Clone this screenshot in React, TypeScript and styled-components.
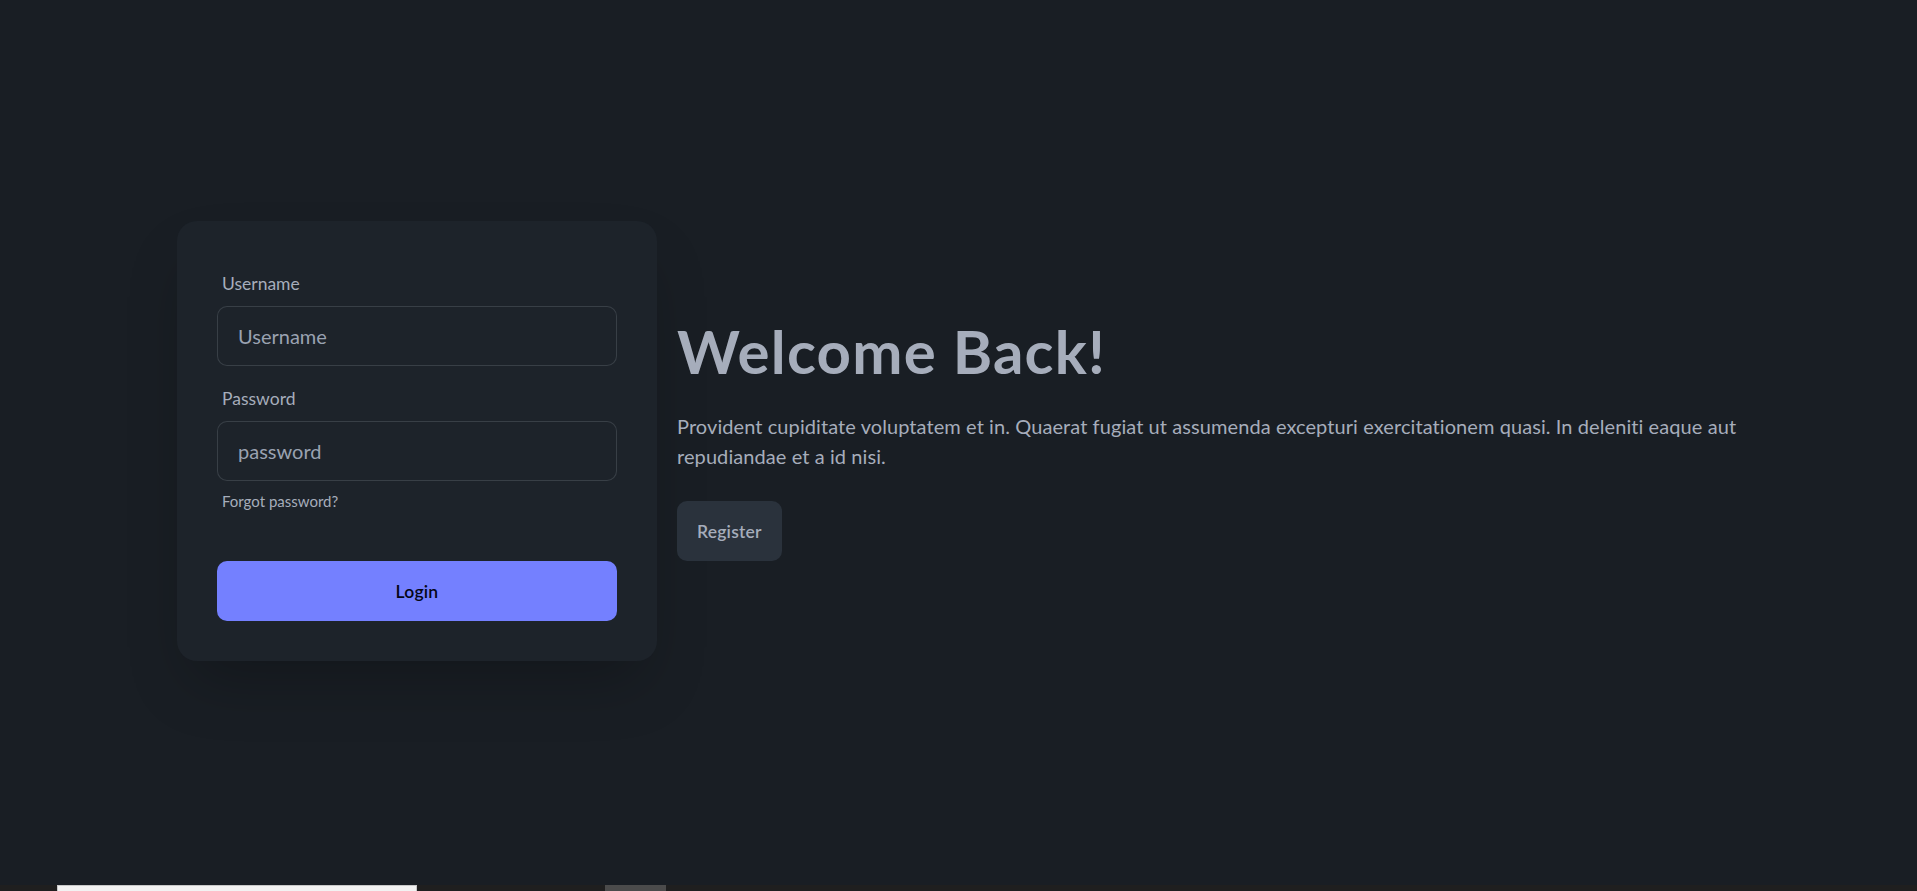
import styled, { createGlobalStyle } from 'styled-components';

const palette = {
	BASE_100: '#1d232a',
	BASE_200: '#191e24',
	NEUTRAL: '#2a323c',
	CONTENT: '#a6adbb',
	PRIMARY: '#7480ff',
	PRIMARY_CONTENT: '#050617',
};

const GlobalStyle = createGlobalStyle`
	html, body {
		margin: 0;
		padding: 0;
		background: ${palette.BASE_200};
	}

	body {
		font-family: Lato, "Noto Sans", sans-serif;
		color: ${palette.CONTENT};
		overflow: hidden;
	}

	* {
		box-sizing: border-box;
	}
`;

const Hero = styled.main`
	display: grid;
	place-items: center;
	min-height: 885px;
	padding-bottom: 3px;
	background: ${palette.BASE_200};
`;

const HeroContent = styled.div`
	display: flex;
	align-items: center;
	gap: 20px;
	width: 100%;
	max-width: 1603px;
	padding: 20px;
`;

const Card = styled.div`
	flex-shrink: 0;
	width: 480px;
	background: ${palette.BASE_100};
	border-radius: 20px;
	box-shadow: 0 31px 62px -15px rgba(0, 0, 0, 0.25);
`;

const CardBody = styled.form`
	display: flex;
	flex-direction: column;
	gap: 10px;
	padding: 40px;
`;

const FormControl = styled.div<{ $spaced?: boolean }>`
	display: flex;
	flex-direction: column;
	margin-top: ${({ $spaced }) => ($spaced ? '30px' : '0')};
`;

const Label = styled.label`
	display: flex;
	align-items: center;
	padding: 10px 5px;
`;

const LabelText = styled.span`
	font-size: 17.5px;
	line-height: 25px;
	color: ${palette.CONTENT};
`;

const LabelLink = styled.a`
	font-size: 15px;
	line-height: 20px;
	color: ${palette.CONTENT};
	cursor: pointer;
	text-decoration: none;
`;

const Input = styled.input`
	height: 60px;
	padding: 0 20px;
	border: 1px solid rgba(166, 173, 187, 0.2);
	border-radius: 10px;
	background: ${palette.BASE_100};
	color: ${palette.CONTENT};
	font-family: inherit;
	font-size: 20px;
	outline: none;

	&::placeholder {
		color: #9aa2b1;
	}
`;

const Button = styled.button<{ $primary?: boolean }>`
	height: 60px;
	padding: 0 20px;
	border: none;
	border-radius: 10px;
	background: ${({ $primary }) => ($primary ? palette.PRIMARY : palette.NEUTRAL)};
	color: ${({ $primary }) => ($primary ? palette.PRIMARY_CONTENT : palette.CONTENT)};
	font-family: inherit;
	font-size: 17.5px;
	font-weight: 600;
	letter-spacing: 0.2px;
	cursor: pointer;
`;

const Intro = styled.section`
	flex: 1;
	text-align: left;
`;

const Title = styled.h1`
	margin: 0;
	font-size: 60px;
	line-height: 1;
	font-weight: 700;
	letter-spacing: 1.2px;
	color: ${palette.CONTENT};
`;

const Lead = styled.p`
	margin: 0;
	padding: 30px 0;
	font-size: 20px;
	line-height: 30px;
	letter-spacing: 0.08px;
`;

const Taskbar = styled.footer`
	display: flex;
	height: 6px;
	padding-left: 57px;
	background: #1f1f1f;
`;

const TaskbarWindow = styled.div`
	width: 360px;
	background: #f2f2f2;
	border: 1px solid #c8c8c8;
	border-bottom: none;
`;

const TaskbarTab = styled.div`
	width: 61px;
	margin-left: 188px;
	background: #4b4b4b;
`;

export default function App() {
	return (
		<>
			<GlobalStyle />
			<Hero>
				<HeroContent>
					<Card>
						<CardBody onSubmit={(e) => e.preventDefault()}>
							<FormControl>
								<Label>
									<LabelText>Username</LabelText>
								</Label>
								<Input type="text" placeholder="Username" />
							</FormControl>
							<FormControl>
								<Label>
									<LabelText>Password</LabelText>
								</Label>
								<Input type="password" placeholder="password" />
								<Label>
									<LabelLink>Forgot password?</LabelLink>
								</Label>
							</FormControl>
							<FormControl $spaced>
								<Button $primary>Login</Button>
							</FormControl>
						</CardBody>
					</Card>
					<Intro>
						<Title>Welcome Back!</Title>
						<Lead>
							Provident cupiditate voluptatem et in. Quaerat fugiat ut assumenda excepturi exercitationem
							quasi. In deleniti eaque aut repudiandae et a id nisi.
						</Lead>
						<Button type="button">Register</Button>
					</Intro>
				</HeroContent>
			</Hero>
			<Taskbar>
				<TaskbarWindow />
				<TaskbarTab />
			</Taskbar>
		</>
	);
}
